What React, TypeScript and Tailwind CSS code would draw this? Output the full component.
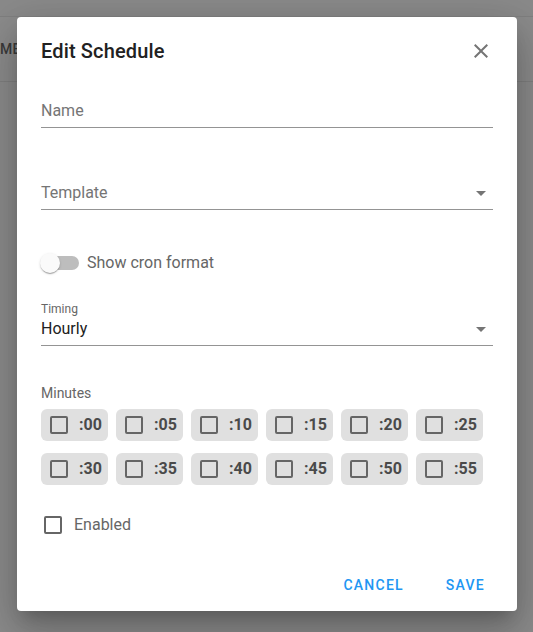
import React from "react";

const minutes = [":00", ":05", ":10", ":15", ":20", ":25", ":30", ":35", ":40", ":45", ":50", ":55"];

function Box() {
  return <span className="block w-[18px] h-[18px] border-2 border-[#666666] rounded-[2px] shrink-0" />;
}

function DropArrow() {
  return (
    <svg width="24" height="24" viewBox="0 0 24 24" className="shrink-0">
      <path d="M7 10l5 5 5-5z" fill="#757575" />
    </svg>
  );
}

export default function App() {
  return (
    <div
      className="relative w-[533px] h-[632px] overflow-hidden bg-[#8c8c8c]"
      style={{ fontFamily: "Roboto, 'Liberation Sans', sans-serif" }}
    >
      {/* page behind overlay */}
      <div className="h-[17px] border-b border-[#808080] bg-[#8a8a8a]" />
      <div className="h-[65px] border-b border-[#808080] flex items-center">
        <span className="text-[14px] font-medium text-[#3a3a3a] tracking-[0.2px]">ME</span>
      </div>

      {/* dialog */}
      <div className="absolute left-[17px] top-[17px] w-[500px] h-[594px] bg-white rounded-[4px] shadow-[0_11px_15px_-7px_rgba(0,0,0,0.2),0_24px_38px_3px_rgba(0,0,0,0.14),0_9px_46px_8px_rgba(0,0,0,0.12)] flex flex-col">
        <div className="px-6 pt-[18px] flex items-center justify-between h-[50px]">
          <span className="text-[20px] leading-[32px] font-medium text-[#212121] tracking-[0.15px]">Edit Schedule</span>
          <svg width="24" height="24" viewBox="0 0 24 24">
            <path
              d="M19 6.41 17.59 5 12 10.59 6.41 5 5 6.41 10.59 12 5 17.59 6.41 19 12 13.41 17.59 19 19 17.59 13.41 12z"
              fill="#757575"
            />
          </svg>
        </div>

        <div className="px-6 flex flex-col">
          {/* Name */}
          <div className="mt-[32px] border-b border-[#949494] pb-[4px]">
            <div className="text-[16px] leading-[24px] text-[#757575]">Name</div>
          </div>

          {/* Template */}
          <div className="mt-[53px] border-b border-[#949494] pb-[4px] flex items-center justify-between h-[29px]">
            <div className="text-[16px] leading-[24px] text-[#757575]">Template</div>
            <DropArrow />
          </div>

          {/* Switch */}
          <div className="mt-[34px] h-[38px] flex items-center">
            <div className="relative w-[39px] h-[20px] ml-[-1px] shrink-0">
              <div className="absolute left-[5px] top-[3px] w-[34px] h-[14px] rounded-full bg-[#bdbdbd]" />
              <div className="absolute left-0 top-0 w-[20px] h-[20px] rounded-full bg-[#fafafa] shadow-[0_2px_1px_-1px_rgba(0,0,0,0.2),0_1px_1px_0_rgba(0,0,0,0.14),0_1px_3px_0_rgba(0,0,0,0.12)]" />
            </div>
            <span className="ml-[8px] text-[16px] leading-[24px] text-[#666666]">Show cron format</span>
          </div>

          {/* Timing */}
          <div className="mt-[19px] border-b border-[#949494] pb-[4px]">
            <div className="text-[12px] leading-[16px] text-[#666666]">Timing</div>
            <div className="flex items-center justify-between h-[24px]">
              <span className="text-[16px] leading-[24px] text-[#212121]">Hourly</span>
              <DropArrow />
            </div>
          </div>

          {/* Minutes */}
          <div className="mt-[37px] text-[14px] leading-[20px] text-[#666666]">Minutes</div>
          <div className="mt-[6px] grid grid-cols-[repeat(6,67px)] gap-x-2 gap-y-3">
            {minutes.map((m) => (
              <div key={m} className="h-[32px] rounded-[6px] bg-[#e0e0e0] flex items-center pl-[9px]">
                <Box />
                <span className="ml-[11px] text-[16px] font-bold text-[#4a4a4a]">{m}</span>
              </div>
            ))}
          </div>

          {/* Enabled */}
          <div className="mt-[28px] h-[24px] flex items-center pl-[3px]">
            <Box />
            <span className="ml-[12px] text-[16px] leading-[24px] text-[#666666]">Enabled</span>
          </div>
        </div>

        {/* actions */}
        <div className="mt-auto mb-[8px] flex justify-end items-center pr-[24px] gap-[26px]">
          <button className="h-[36px] px-2 text-[14px] font-medium tracking-[1.25px] text-[#2196f3]">CANCEL</button>
          <button className="h-[36px] px-2 min-w-[54px] text-[14px] font-medium tracking-[1.25px] text-[#2196f3]">SAVE</button>
        </div>
      </div>
    </div>
  );
}
